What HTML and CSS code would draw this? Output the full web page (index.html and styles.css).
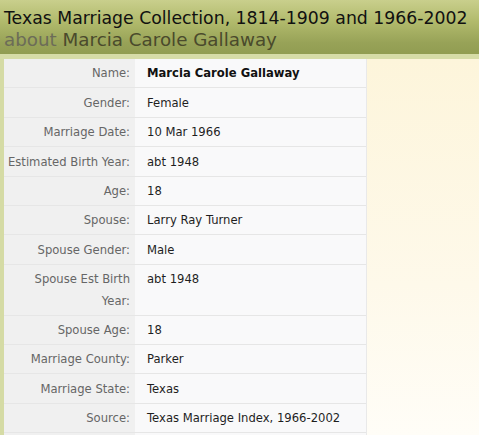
FILE: index.html
```html
<!DOCTYPE html>
<html>
<head>
<meta charset="utf-8">
<link rel="stylesheet" href="styles.css">
</head>
<body>
<header class="hdr">
  <h1 class="title">Texas Marriage Collection, 1814-1909 and 1966-2002</h1>
  <h2 class="subtitle"><span class="about">about</span> Marcia Carole Gallaway</h2>
</header>
<div class="band"></div>
<div class="main">
  <div class="strip"></div>
  <div class="record">
    <table class="facts">
      <colgroup><col class="c-label"><col class="c-value"></colgroup>
      <tr><th>Name:</th><td class="strong">Marcia Carole Gallaway</td></tr>
      <tr><th>Gender:</th><td>Female</td></tr>
      <tr><th>Marriage Date:</th><td>10 Mar 1966</td></tr>
      <tr><th>Estimated Birth Year:</th><td>abt 1948</td></tr>
      <tr><th>Age:</th><td>18</td></tr>
      <tr><th>Spouse:</th><td>Larry Ray Turner</td></tr>
      <tr><th>Spouse Gender:</th><td>Male</td></tr>
      <tr><th>Spouse Est Birth Year:</th><td>abt 1948</td></tr>
      <tr><th>Spouse Age:</th><td>18</td></tr>
      <tr><th>Marriage County:</th><td>Parker</td></tr>
      <tr><th>Marriage State:</th><td>Texas</td></tr>
      <tr><th>Source:</th><td>Texas Marriage Index, 1966-2002</td></tr>
    </table>
    <div class="more">
      <span class="bulb"><svg width="10" height="4" viewBox="0 0 10 4"><path d="M1 4 L5 0.5 L9 4" fill="#f3e7a0" stroke="#d8c25a" stroke-width="1"/></svg></span>
    </div>
  </div>
  <div class="aside"></div>
</div>
</body>
</html>
```
FILE: styles.css
```css
html, body {
  margin: 0;
  padding: 0;
}
body {
  width: 479px;
  height: 435px;
  overflow: hidden;
  background: #fdf6de;
  font-family: "DejaVu Sans", Verdana, sans-serif;
}
.hdr {
  height: 54px;
  box-sizing: border-box;
  padding: 7px 0 0 4px;
  background: linear-gradient(to bottom, #c9cf8c 0%, #b1ba6c 40%, #97a257 80%, #919d52 100%);
}
.title {
  margin: 0;
  font-weight: normal;
  font-size: 17.3px;
  line-height: 22px;
  color: #111;
  white-space: nowrap;
}
.subtitle {
  margin: 0;
  font-weight: normal;
  font-size: 18.3px;
  line-height: 22px;
  color: #4a4a2c;
  white-space: nowrap;
}
.about {
  color: #6c6c58;
}
.band {
  height: 5px;
  background: #d6dca7;
}
.main {
  display: flex;
  height: 376px;
}
.strip {
  width: 4px;
  background: #d5dba5;
  flex: none;
}
.record {
  width: 363px;
  flex: none;
  background: linear-gradient(to right, #f0f0f0 0, #f0f0f0 131px, #f9f9fa 131px);
  border-right: 1px solid #e9e9e9;
  box-sizing: border-box;
}
.aside {
  flex: 1;
  background: linear-gradient(to bottom, #fdf5db 0%, #fef9ea 60%, #fffdf7 100%);
}
.facts {
  border-collapse: collapse;
  table-layout: fixed;
  width: 100%;
  font-size: 11.6px;
}
.c-label {
  width: 131px;
}
.facts th {
  text-align: right;
  font-weight: normal;
  color: #666;
  background: #f0f0f0;
  padding: 4.4px 5px 2.4px 1px;
  line-height: 21.6px;
  vertical-align: top;
  border-bottom: 1px solid #e6e6e6;
}
.facts td {
  color: #1e1e1e;
  background: #f9f9fa;
  padding: 4.4px 4px 2.4px 12px;
  line-height: 21.6px;
  vertical-align: top;
  border-bottom: 1px solid #e6e6e6;
  white-space: nowrap;
}
.facts td.strong {
  font-weight: bold;
  color: #111;
}
.more {
  display: flex;
  padding-left: 29px;
}
.bulb {
  display: block;
  height: 4px;
  overflow: hidden;
}
```
